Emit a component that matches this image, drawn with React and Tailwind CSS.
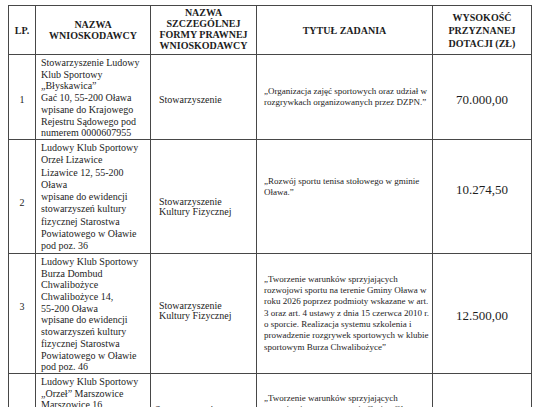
const rows = [
  {
    lp: "1",
    height: "h-[84px]",
    leading: "leading-[11.7px]",
    applicant: [
      "Stowarzyszenie Ludowy",
      "Klub Sportowy",
      "„Błyskawica”",
      "Gać 10, 55-200 Oława",
      "wpisane do Krajowego",
      "Rejestru Sądowego pod",
      "numerem 0000607955",
    ],
    form: ["Stowarzyszenie"],
    title: [
      "„Organizacja zajęć sportowych oraz udział w",
      "rozgrywkach organizowanych przez DZPN.”",
    ],
    amount: "70.000,00",
    lpPad: "pt-[6px]",
    formPad: "pt-[6px]",
    titlePad: "",
    amountPad: "pt-[6px]",
  },
  {
    lp: "2",
    height: "h-[114px]",
    leading: "leading-[12.3px]",
    applicant: [
      "Ludowy Klub Sportowy",
      "Orzeł Lizawice",
      "Lizawice 12, 55-200",
      "Oława",
      "wpisane do ewidencji",
      "stowarzyszeń kultury",
      "fizycznej Starostwa",
      "Powiatowego w Oławie",
      "pod poz. 36",
    ],
    form: ["Stowarzyszenie", "Kultury Fizycznej"],
    title: ["„Rozwój sportu tenisa stołowego w gminie", "Oława.”"],
    amount: "10.274,50",
    lpPad: "pt-[12px]",
    formPad: "pt-[21px]",
    titlePad: "pb-[18px]",
    amountPad: "pb-[14px]",
  },
  {
    lp: "3",
    height: "h-[120px]",
    leading: "leading-[11.7px]",
    applicant: [
      "Ludowy Klub Sportowy",
      "Burza Dombud",
      "Chwalibożyce",
      "Chwalibożyce 14,",
      "55-200 Oława",
      "wpisane do ewidencji",
      "stowarzyszeń kultury",
      "fizycznej Starostwa",
      "Powiatowego w Oławie",
      "pod poz. 46",
    ],
    form: ["Stowarzyszenie", "Kultury Fizycznej"],
    title: [
      "„Tworzenie warunków sprzyjających",
      "rozwojowi sportu na terenie Gminy Oława w",
      "roku 2026 poprzez podmioty wskazane w art.",
      "3 oraz art. 4 ustawy z dnia 15 czerwca 2010 r.",
      "o sporcie. Realizacja systemu szkolenia i",
      "prowadzenie rozgrywek sportowych w klubie",
      "sportowym Burza Chwalibożyce”",
    ],
    amount: "12.500,00",
    lpPad: "pb-[14px]",
    formPad: "pb-[4px]",
    titlePad: "",
    amountPad: "pt-[4px]",
  },
];

const lastRow = {
  applicant: [
    "Ludowy Klub Sportowy",
    "„Orzeł” Marszowice",
    "Marszowice 16,",
    "55-200 Oława",
    "wpisane do ewidencji",
    "stowarzyszeń kultury",
    "fizycznej Starostwa",
    "Powiatowego w Oławie",
  ],
  form: ["Stowarzyszenie", "Kultury Fizycznej"],
  title: [
    "„Tworzenie warunków sprzyjających",
    "rozwojowi sportu na terenie Gminy Oława w",
    "roku 2026 poprzez podmioty wskazane w art.",
    "3 oraz art. 4 ustawy z dnia 15 czerwca 2010 r.",
  ],
};

const cell = "border border-[#474747] p-0";

const Lines = ({ lines }) =>
  lines.map((line, i) => (
    <span key={i} className="block whitespace-nowrap">
      {line}
    </span>
  ));

export default function App() {
  return (
    <div className="h-[407px] w-[540px] overflow-hidden bg-white pl-[8px] pt-[5px] font-['Liberation_Serif',serif] text-[#1d1d1d]">
      <table className="w-[523px] table-fixed border-collapse">
        <colgroup>
          <col className="w-[27px]" />
          <col className="w-[115px]" />
          <col className="w-[106px]" />
          <col className="w-[176px]" />
          <col className="w-[99px]" />
        </colgroup>
        <thead>
          <tr className="h-[49px] text-center text-[10px] font-bold leading-[11px]">
            <th className={`${cell} align-middle`}>LP.</th>
            <th className={`${cell} align-middle`}>
              NAZWA
              <br />
              WNIOSKODAWCY
            </th>
            <th className={`${cell} align-middle`}>
              <div className="pb-[2px]">
                NAZWA
                <br />
                SZCZEGÓLNEJ
                <br />
                FORMY PRAWNEJ
                <br />
                WNIOSKODAWCY
              </div>
            </th>
            <th className={`${cell} align-middle`}>TYTUŁ ZADANIA</th>
            <th className={`${cell} align-middle leading-[13px]`}>
              WYSOKOŚĆ
              <br />
              PRZYZNANEJ
              <br />
              DOTACJI (ZŁ)
            </th>
          </tr>
        </thead>
        <tbody>
          {rows.map((row) => (
            <tr key={row.lp} className={row.height}>
              <td className={`${cell} align-middle text-center text-[10px]`}>
                <div className={row.lpPad}>{row.lp}</div>
              </td>
              <td className={`${cell} align-top text-[10px] ${row.leading}`}>
                <div className="pl-[5px] pt-[2px]">
                  <Lines lines={row.applicant} />
                </div>
              </td>
              <td className={`${cell} align-middle text-[10px] leading-[10px]`}>
                <div className={`pl-[8px] ${row.formPad}`}>
                  <Lines lines={row.form} />
                </div>
              </td>
              <td className={`${cell} align-middle text-[9px] leading-[11.3px]`}>
                <div className={`pl-[7px] ${row.titlePad}`}>
                  <Lines lines={row.title} />
                </div>
              </td>
              <td className={`${cell} align-middle text-center text-[13px]`}>
                <div className={row.amountPad}>{row.amount}</div>
              </td>
            </tr>
          ))}
          <tr className="h-[96px]">
            <td className={`${cell} align-top text-center text-[10px]`}>
              <div className="pt-[50px]">4</div>
            </td>
            <td className={`${cell} align-top text-[10px] leading-[11.7px]`}>
              <div className="pl-[5px] pt-[2px]">
                <Lines lines={lastRow.applicant} />
              </div>
            </td>
            <td className={`${cell} align-top text-[10px] leading-[10px]`}>
              <div className="pl-[4px] pt-[31px]">
                <Lines lines={lastRow.form} />
              </div>
            </td>
            <td className={`${cell} align-top text-[9px] leading-[11.3px]`}>
              <div className="pl-[7px] pt-[19px]">
                <Lines lines={lastRow.title} />
              </div>
            </td>
            <td className={`${cell} align-top`} />
          </tr>
        </tbody>
      </table>
    </div>
  );
}
